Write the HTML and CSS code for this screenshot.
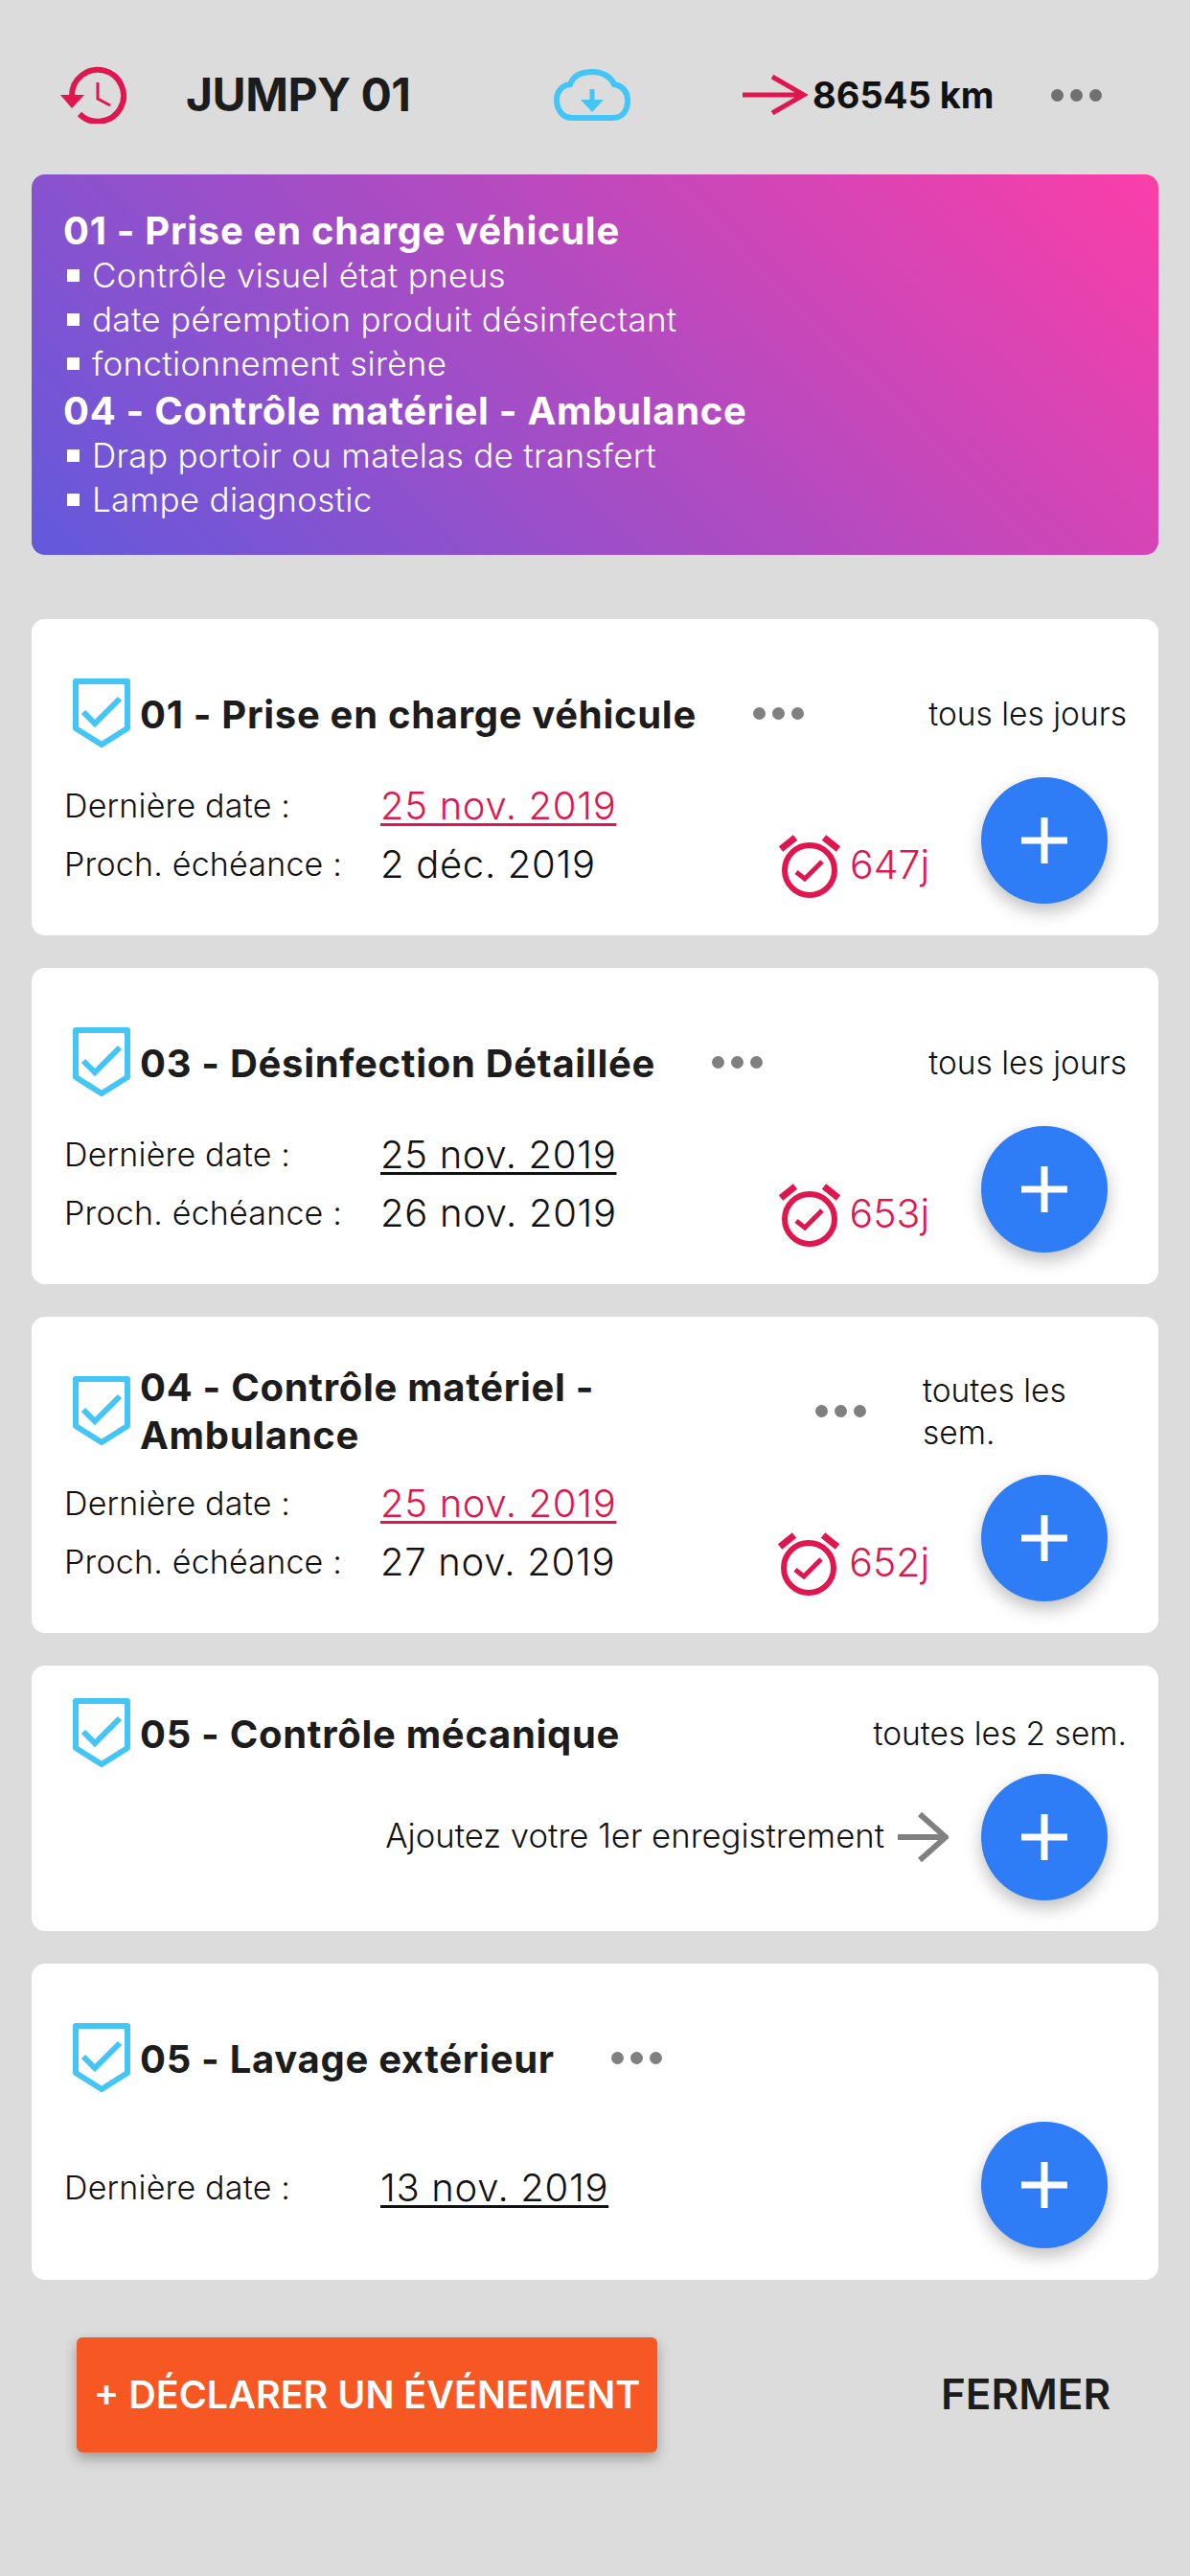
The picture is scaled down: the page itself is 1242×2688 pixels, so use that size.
FILE: index.html
```html
<!DOCTYPE html>
<html lang="fr">
<head>
<meta charset="utf-8">
<title>JUMPY 01</title>
<link rel="stylesheet" href="styles.css">
</head>
<body>
<svg class="defs" xmlns="http://www.w3.org/2000/svg">
  <symbol id="shield" viewBox="0 0 60 72">
    <path d="M3 3H57V52L30 69L3 52Z" fill="none" stroke="#43c5f5" stroke-width="6" stroke-linejoin="round"/>
    <path d="M11 35L23 47L49 21" fill="none" stroke="#43c5f5" stroke-width="6"/>
  </symbol>
  <symbol id="alarm" viewBox="0 0 66 67">
    <circle cx="33" cy="37" r="26" fill="none" stroke="#e0174f" stroke-width="6"/>
    <path d="M3 15L18 3M48 3L63 15" fill="none" stroke="#e0174f" stroke-width="7"/>
    <path d="M19 39L28 46L46 28" fill="none" stroke="#e0174f" stroke-width="5"/>
  </symbol>
  <symbol id="plus" viewBox="0 0 48 48">
    <path d="M24 0V48M0 24H48" fill="none" stroke="#fff" stroke-width="7"/>
  </symbol>
</svg>

<header class="topbar">
  <svg class="ico-history" viewBox="63 69 70 60" aria-hidden="true">
    <path d="M75 100A27 27 0 1 1 83 119" fill="none" stroke="#e0174f" stroke-width="6"/>
    <path d="M63 99H88L75 113Z" fill="#e0174f"/>
    <path d="M102 86V103L115 110" fill="none" stroke="#e0174f" stroke-width="3"/>
  </svg>
  <h1 class="vehicle">JUMPY 01</h1>
  <svg class="ico-cloud" viewBox="578 72 80 54" aria-hidden="true">
    <path d="M597 123C586 123 581 113 581 104C581 95 587 89 595 88C598 80 606 75 618 75C630 75 638 81 641 88C650 90 655 96 655 105C655 115 650 123 640 123Z" fill="none" stroke="#43c5f5" stroke-width="6"/>
    <path d="M618 93V106" stroke="#43c5f5" stroke-width="5"/>
    <path d="M606 104H630L618 117Z" fill="#43c5f5"/>
  </svg>
  <svg class="ico-km" viewBox="0 0 68 42" aria-hidden="true">
    <path d="M0 21H64M31 2L64 21L31 40" fill="none" stroke="#e0174f" stroke-width="5"/>
  </svg>
  <span class="km">86545 km</span>
  <span class="dots dots-top"><i></i><i></i><i></i></span>
</header>

<section class="banner">
  <h2>01 - Prise en charge véhicule</h2>
  <ul>
    <li>Contrôle visuel état pneus</li>
    <li>date péremption produit désinfectant</li>
    <li>fonctionnement sirène</li>
  </ul>
  <h2>04 - Contrôle matériel - Ambulance</h2>
  <ul>
    <li>Drap portoir ou matelas de transfert</li>
    <li>Lampe diagnostic</li>
  </ul>
</section>

<main class="cards">
  <article class="card">
    <div class="card-head">
      <svg class="shield"><use href="#shield"/></svg>
      <h3 class="title">01 - Prise en charge véhicule</h3>
      <span class="dots"><i></i><i></i><i></i></span>
      <span class="freq">tous les jours</span>
    </div>
    <div class="card-body">
      <dl class="dates">
        <div class="row"><dt>Dernière date :</dt><dd class="last late">25 nov. 2019</dd></div>
        <div class="row"><dt>Proch. échéance :</dt><dd>2 déc. 2019</dd></div>
      </dl>
      <div class="alarm"><svg><use href="#alarm"/></svg><span>647j</span></div>
      <button class="add"><svg><use href="#plus"/></svg></button>
    </div>
  </article>

  <article class="card">
    <div class="card-head">
      <svg class="shield"><use href="#shield"/></svg>
      <h3 class="title">03 - Désinfection Détaillée</h3>
      <span class="dots"><i></i><i></i><i></i></span>
      <span class="freq">tous les jours</span>
    </div>
    <div class="card-body">
      <dl class="dates">
        <div class="row"><dt>Dernière date :</dt><dd class="last">25 nov. 2019</dd></div>
        <div class="row"><dt>Proch. échéance :</dt><dd>26 nov. 2019</dd></div>
      </dl>
      <div class="alarm"><svg><use href="#alarm"/></svg><span>653j</span></div>
      <button class="add"><svg><use href="#plus"/></svg></button>
    </div>
  </article>

  <article class="card">
    <div class="card-head">
      <svg class="shield"><use href="#shield"/></svg>
      <h3 class="title title-wrap">04 - Contrôle matériel - Ambulance</h3>
      <span class="dots"><i></i><i></i><i></i></span>
      <span class="freq freq-wrap">toutes les sem.</span>
    </div>
    <div class="card-body">
      <dl class="dates">
        <div class="row"><dt>Dernière date :</dt><dd class="last late">25 nov. 2019</dd></div>
        <div class="row"><dt>Proch. échéance :</dt><dd>27 nov. 2019</dd></div>
      </dl>
      <div class="alarm"><svg><use href="#alarm"/></svg><span>652j</span></div>
      <button class="add"><svg><use href="#plus"/></svg></button>
    </div>
  </article>

  <article class="card card-empty">
    <div class="card-head">
      <svg class="shield"><use href="#shield"/></svg>
      <h3 class="title">05 - Contrôle mécanique</h3>
      <span class="freq">toutes les 2 sem.</span>
    </div>
    <div class="card-body">
      <span class="hint">Ajoutez votre 1er enregistrement</span>
      <svg class="ico-hint" viewBox="0 0 53 52" aria-hidden="true">
        <path d="M0 26H50M23 2L50 26L23 50" fill="none" stroke="#808080" stroke-width="6"/>
      </svg>
      <button class="add"><svg><use href="#plus"/></svg></button>
    </div>
  </article>

  <article class="card">
    <div class="card-head">
      <svg class="shield"><use href="#shield"/></svg>
      <h3 class="title">05 - Lavage extérieur</h3>
      <span class="dots"><i></i><i></i><i></i></span>
    </div>
    <div class="card-body">
      <dl class="dates dates-single">
        <div class="row"><dt>Dernière date :</dt><dd class="last">13 nov. 2019</dd></div>
      </dl>
      <button class="add"><svg><use href="#plus"/></svg></button>
    </div>
  </article>
</main>

<footer class="actions">
  <button class="declare">+ DÉCLARER UN ÉVÉNEMENT</button>
  <button class="close">FERMER</button>
</footer>
</body>
</html>
```
FILE: styles.css
```css
* { box-sizing: border-box; }
html, body { margin: 0; padding: 0; }
body {
  width: 1242px;
  height: 2688px;
  background: #dcdcdc;
  color: #111;
  font-family: "Inter", "Liberation Sans", sans-serif;
  overflow: hidden;
}
.defs { display: none; }
h1, h2, h3, ul, dl, dd { margin: 0; padding: 0; }
button { border: 0; padding: 0; font-family: inherit; cursor: pointer; }

/* top bar */
.topbar {
  height: 182px;
  padding: 16px 0 0 63px;
  display: flex;
  align-items: center;
}
.ico-history { width: 70px; height: 60px; flex: none; }
.vehicle {
  margin-left: 61px;
  width: 234px;
  font-size: 48px;
  font-weight: 700;
  line-height: 1;
  letter-spacing: -.5px;
  white-space: nowrap;
  color: #1c1c1c;
}
.ico-cloud { margin-left: 150px; width: 80px; height: 54px; flex: none; }
.ico-km { margin-left: 117px; width: 68px; height: 42px; flex: none; }
.km {
  margin-left: 5px;
  width: 249px;
  font-size: 38px;
  font-weight: 700;
  white-space: nowrap;
}
.dots { display: inline-flex; gap: 7px; flex: none; }
.dots i { width: 13px; height: 13px; border-radius: 50%; background: #808080; }
.dots-top i { background: #707070; }

/* banner */
.banner {
  margin: 0 33px;
  height: 397px;
  padding: 36px 33px;
  border-radius: 14px;
  color: #fff;
  background: linear-gradient(45deg, #6259dc, #fb3ea8);
}
.banner h2 {
  font-size: 40px;
  line-height: 46px;
  font-weight: 700;
  letter-spacing: .7px;
  white-space: nowrap;
}
.banner ul { list-style: none; margin-bottom: 4px; }
.banner li {
  display: flex;
  align-items: center;
  gap: 13px;
  padding-left: 4px;
  font-size: 35px;
  font-weight: 300;
  letter-spacing: .3px;
  line-height: 46px;
  white-space: nowrap;
}
.banner li::before { content: ""; width: 13px; height: 13px; background: #fff; flex: none; }

/* cards */
.cards {
  margin: 67px 33px 0;
  display: flex;
  flex-direction: column;
  gap: 34px;
}
.card {
  height: 330px;
  padding: 62px 33px 33px 34px;
  background: #fff;
  border-radius: 14px;
}
.card-empty { height: 277px; padding-top: 34px; }
.card-head {
  height: 72px;
  padding-left: 9px;
  display: flex;
  align-items: center;
}
.shield { width: 60px; height: 72px; flex: none; }
.title {
  margin-left: 10px;
  padding-top: 4px;
  font-size: 40px;
  line-height: 50px;
  font-weight: 700;
  letter-spacing: .7px;
  color: #1c1c1c;
}
.title-wrap { width: 620px; padding-top: 2px; }
.card-head .dots { margin-left: 59px; }
.title-wrap + .dots { margin-left: 85px; }
.freq {
  margin-left: auto;
  padding-top: 2px;
  font-size: 33.5px;
  font-weight: 300;
  line-height: 44px;
  white-space: nowrap;
}
.freq-wrap { white-space: normal; width: 213px; }

.card-body {
  height: 132px;
  margin-top: 31px;
  padding-right: 20px;
  display: flex;
  align-items: center;
}
.card-empty .card-body { margin-top: 7px; }
.dates { margin-right: auto; padding-bottom: 13px; }
.dates-single { padding-bottom: 0; padding-top: 4px; }
.row { display: flex; align-items: center; height: 61px; }
.row dt {
  width: 330px;
  font-size: 34px;
  font-weight: 300;
  letter-spacing: .2px;
  white-space: nowrap;
}
.row dd {
  font-size: 40px;
  font-weight: 300;
  letter-spacing: .7px;
  white-space: nowrap;
  color: #111;
}
.last { text-decoration: underline; text-decoration-thickness: 3px; text-underline-offset: 4px; }
.late { color: #e0174f !important; }

.alarm {
  display: flex;
  align-items: center;
  gap: 9px;
  margin: 54px 54px 0 0;
  color: #e0174f;
  font-size: 41px;
  font-weight: 300;
}
.alarm svg { width: 66px; height: 67px; flex: none; }
.alarm span { padding-bottom: 5px; }

.add {
  width: 132px;
  height: 132px;
  flex: none;
  border-radius: 50%;
  background: #2f7df6;
  box-shadow: 0 8px 18px rgba(0, 0, 0, .25);
  display: flex;
  align-items: center;
  justify-content: center;
}
.add svg { width: 48px; height: 48px; }

.hint {
  margin-left: auto;
  padding-bottom: 5px;
  font-size: 34.7px;
  font-weight: 300;
  white-space: nowrap;
}
.ico-hint { margin: 0 34px 0 14px; width: 53px; height: 52px; flex: none; }

/* footer */
.actions {
  margin: 60px 0 0 80px;
  display: flex;
  align-items: center;
}
.declare {
  width: 606px;
  height: 120px;
  border-radius: 6px;
  background: #f75823;
  color: #fff;
  font-size: 39.5px;
  font-weight: 600;
  box-shadow: 0 6px 14px rgba(0, 0, 0, .3);
  white-space: nowrap;
}
.close {
  margin-left: 296px;
  padding-bottom: 2px;
  background: none;
  color: #1c1c1c;
  font-size: 44px;
  font-weight: 600;
}
```
